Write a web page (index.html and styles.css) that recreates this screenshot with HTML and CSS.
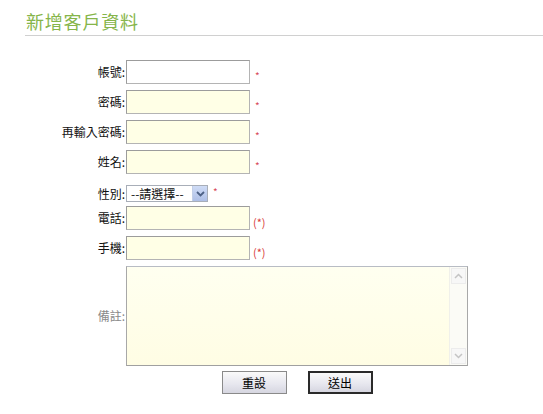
FILE: index.html
```html
<!DOCTYPE html>
<html lang="zh-Hant">
<head>
<meta charset="utf-8">
<title>新增客戶資料</title>
<link rel="stylesheet" href="styles.css">
</head>
<body>
<div class="header"><h1 class="title">新增客戶資料</h1></div>
<form class="form">
  <div class="row">
    <label class="label">帳號:</label>
    <input class="text first" type="text">
    <span class="mark">*</span>
  </div>
  <div class="row">
    <label class="label">密碼:</label>
    <input class="text" type="password">
    <span class="mark">*</span>
  </div>
  <div class="row">
    <label class="label">再輸入密碼:</label>
    <input class="text" type="password">
    <span class="mark">*</span>
  </div>
  <div class="row">
    <label class="label">姓名:</label>
    <input class="text" type="text">
    <span class="mark">*</span>
  </div>
  <div class="row row-select">
    <label class="label">性別:</label>
    <span class="select">
      <select class="select-input"><option>--請選擇--</option><option>男</option><option>女</option></select>
      <span class="select-btn"><svg width="9" height="6" viewBox="0 0 9 6"><path d="M1 1 L4.5 4.5 L8 1" fill="none" stroke="#4d6185" stroke-width="1.8"/></svg></span>
    </span>
    <span class="mark mark-sel">*</span>
  </div>
  <div class="row">
    <label class="label">電話:</label>
    <input class="text" type="text">
    <span class="paren">(*)</span>
  </div>
  <div class="row">
    <label class="label">手機:</label>
    <input class="text" type="text">
    <span class="paren">(*)</span>
  </div>
  <div class="row row-note">
    <label class="label label-gray">備註:</label>
    <div class="note">
      <textarea class="note-input"></textarea>
      <div class="scroll">
        <span class="sbtn"><svg width="9" height="6" viewBox="0 0 9 6"><path d="M1 5 L4.5 1.5 L8 5" fill="none" stroke="#c4c4c4" stroke-width="1.5"/></svg></span>
        <span class="sbtn"><svg width="9" height="6" viewBox="0 0 9 6"><path d="M1 1 L4.5 4.5 L8 1" fill="none" stroke="#c4c4c4" stroke-width="1.5"/></svg></span>
      </div>
    </div>
  </div>
  <div class="row row-buttons">
    <span class="label"></span>
    <div class="buttons">
      <button class="btn" type="reset">重設</button>
      <button class="btn btn-default" type="submit">送出</button>
    </div>
  </div>
</form>
</body>
</html>
```
FILE: styles.css
```css
html, body {
  margin: 0;
  padding: 0;
  background: #ffffff;
}
body {
  font-family: "Noto Sans CJK TC", "Noto Sans", sans-serif;
  font-size: 12px;
  color: #111;
  width: 543px;
  height: 414px;
  overflow: hidden;
}
.header {
  margin-left: 25px;
  padding: 10px 0 2px 1px;
  border-bottom: 1px solid #d0d0d0;
}
.title {
  margin: 0;
  font-size: 18px;
  line-height: 23px;
  font-weight: normal;
  color: #86b54a;
  letter-spacing: 0.8px;
}
.form {
  margin-top: 24px;
  display: flex;
  flex-direction: column;
}
.row {
  display: flex;
  align-items: center;
  margin-bottom: 6px;
}
.label {
  width: 125px;
  flex: none;
  text-align: right;
  line-height: 14px;
  color: #111;
}
.label-gray {
  color: #8a8a8a;
}
.text {
  box-sizing: border-box;
  width: 124px;
  height: 24px;
  margin: 0 0 0 1px;
  padding: 2px 3px;
  border: 1px solid;
  border-color: #9c9c9c #b4b4b4 #b4b4b4 #9c9c9c;
  background: #ffffe6;
  font: inherit;
  outline: none;
}
.text.first {
  background: #ffffff;
}
.mark {
  align-self: flex-end;
  margin: 0 0 2px 5px;
  color: #d84a5a;
  font-size: 10px;
  line-height: 12px;
}
.paren {
  align-self: flex-end;
  margin: 0 0 1px 3px;
  color: #d83a3a;
  font-size: 11px;
  line-height: 14px;
}
.row-select {
  margin-top: 5px;
  margin-bottom: 4px;
}
.select {
  box-sizing: border-box;
  margin-left: 1px;
  width: 82px;
  height: 17px;
  display: inline-flex;
  align-items: stretch;
  border: 1px solid #a8aeb8;
  background: #fff;
}
.select-input {
  appearance: none;
  -webkit-appearance: none;
  flex: 1;
  min-width: 0;
  border: 0;
  margin: 0;
  padding: 0 0 0 4px;
  background: transparent;
  font: inherit;
  font-size: 12px;
  line-height: 15px;
  color: #111;
  outline: none;
}
.select-btn {
  width: 14px;
  flex: none;
  display: flex;
  align-items: center;
  justify-content: center;
  background: linear-gradient(#cfdcf6, #aebfe6);
  border-left: 1px solid #c2cfe8;
}
.mark-sel {
  align-self: center;
  margin: 0 0 3px 5px;
}
.row-note {
  margin-bottom: 5px;
}
.note {
  box-sizing: border-box;
  margin-left: 1px;
  width: 342px;
  height: 100px;
  display: flex;
  border: 1px solid;
  border-color: #b8bcc4 #a8a8a8 #a0a0a0 #a8a8a8;
  background: #fffde6;
}
.note-input {
  flex: 1;
  border: 0;
  margin: 0;
  padding: 2px;
  resize: none;
  background: linear-gradient(#fffff0, #fffde4);
  font: inherit;
  outline: none;
}
.scroll {
  width: 17px;
  flex: none;
  display: flex;
  flex-direction: column;
  justify-content: space-between;
  background: #fbfbf6;
  border-left: 1px solid #f0f0ea;
}
.sbtn {
  box-sizing: border-box;
  height: 16px;
  margin: 1px;
  display: flex;
  align-items: center;
  justify-content: center;
  border: 1px solid #ececec;
  background: #f7f7f7;
}
.buttons {
  width: 342px;
  margin-left: 1px;
  display: flex;
  justify-content: center;
  gap: 21px;
}
.btn {
  box-sizing: border-box;
  width: 65px;
  height: 23px;
  margin: 0;
  padding: 0;
  font: inherit;
  font-size: 12px;
  color: #000;
  border: 1px solid #8a8a8a;
  background: linear-gradient(#fafafa, #e6e6ee 60%, #d6d6e0);
  cursor: pointer;
}
.btn-default {
  border: 2px solid #2a2a2a;
}
```
